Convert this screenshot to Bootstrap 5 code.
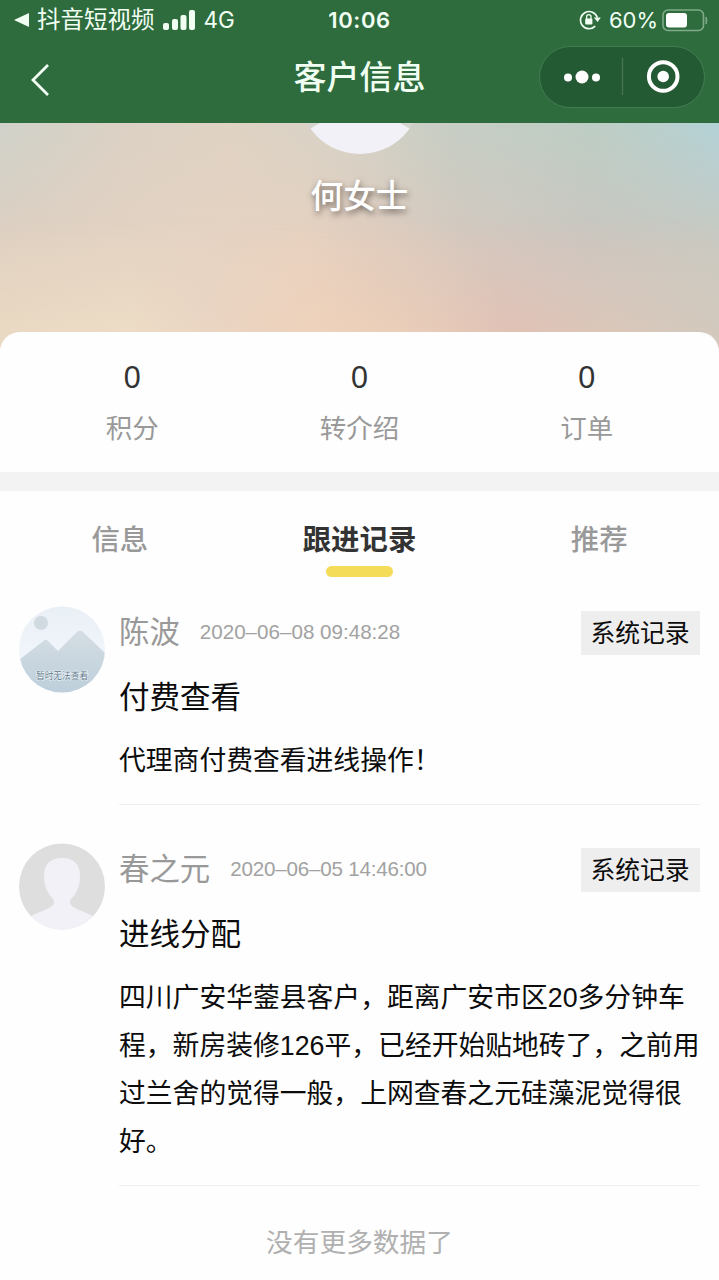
<!DOCTYPE html>
<html lang="zh-CN">
<head>
<meta charset="utf-8">
<meta name="viewport" content="width=device-width, initial-scale=1">
<title>客户信息</title>
<link rel="stylesheet" href="https://cdn.jsdelivr.net/npm/bootstrap@5.3.0/dist/css/bootstrap.min.css">
<style>
  body { font-family: "Liberation Sans", "Noto Sans CJK SC", sans-serif; color: #0c0c0c; background: #fefefe; overflow-x: hidden; }
  svg { display: block; flex: none; }
  .topbar { background: #2e6c3e; color: #f1fff3; height: 123px; }
  .status-row { height: 40px; padding: 0 11px 0 14px; font-family: Inter, "Noto Sans CJK SC", sans-serif; font-size: 23.5px; line-height: 40px; }
  .status-row > div { flex: 1 1 0; }
  .status-row .clock { font-size: 22px; font-weight: 600; letter-spacing: .6px; margin-right: 3px; }
  .status-row .network { font-size: 22.5px; }
  .status-row .level { font-size: 22px; margin: 0 4px 0 8px; }
  .title-row { height: 83px; padding: 0 14px; }
  .title-row > div { flex: 1 1 0; }
  .back svg { margin: 0 0 3px 16px; }
  .page-title { font-size: 33px; font-weight: 500; line-height: 48px; margin-top: -7px; }
  .capsule { width: 166px; height: 62px; border: 1.5px solid #417d50; border-radius: 31px; background: #245a33; margin-top: -10px; }
  .hero { height: 209px; }
  .hero-bg { height: 225px; position: relative; z-index: 0; background: linear-gradient(90deg, #dfd0c2, #e5d3c3 25%, #e7d2c1 42%, #dfccbf 53%, #d4c9c0 65%, #cbc6c1 82%, #c9c9c1); }
  .hero-bg::before, .hero-bg::after { content: ""; position: absolute; inset: 0; z-index: -1; }
  .hero-bg::before { background: linear-gradient(90deg, #cfd1c9, #dbd1c4 17%, #dfd2c3 32%, #d6d2c6 48%, #c6cdc4 63%, #bdcdc3 82%, #b9cfcb 91%, #b2d1d6); -webkit-mask-image: linear-gradient(#000, transparent 56%); mask-image: linear-gradient(#000, transparent 56%); }
  .hero-bg::after { background: linear-gradient(90deg, #ead9c2, #eddcc5 18%, #ead5c3 29%, #efd1b9 45%, #ebceb8 55%, #e2c1b5 71%, #dcc7b9 84%, #d3c9bd); -webkit-mask-image: linear-gradient(transparent 42%, #000 96%); mask-image: linear-gradient(transparent 42%, #000 96%); }
  .hero-name { font-size: 32.7px; font-weight: 500; line-height: 48px; margin-top: 17px; color: #fff; text-shadow: 1px 3px 6px rgba(70,60,55,.75); }
  .stats { height: 140px; border-radius: 20px 20px 0 0; padding: 22px 18.5px 0; background: #fefefe; z-index: 1; }
  .stats b { font-weight: 400; font-size: 30.5px; line-height: 46px; color: #333; }
  .stats span { font-size: 26.5px; line-height: 40px; margin-top: 9px; color: #999; }
  .gap-bar { height: 19px; background: #f3f3f3; }
  .tabs { height: 97px; font-size: 28.4px; font-weight: 500; color: #999; padding: 29px 0 0; line-height: 40px; }
  .tabs .current { color: #333; font-weight: 700; }
  .tabs .current::after { content: ""; width: 67px; height: 11px; border-radius: 6px; background: #f4dc59; margin-top: 6px; }
  .record { padding: 18px 19.5px 0 19px; gap: 14px; }
  .record-main { min-width: 0; border-bottom: 1.5px solid #efefef; }
  .record-head { height: 52px; }
  .who { font-size: 30.4px; color: #999; line-height: 52px; }
  .when { font-size: 20.6px; color: #a2a2a2; margin-left: 20px; line-height: 52px; }
  .tag { font-size: 24.8px; line-height: 45px; width: 119px; height: 44px; background: #eee; margin-top: 5px; }
  .what { font-size: 30.5px; line-height: 44px; margin-top: 17px; }
  .note { font-size: 26.8px; line-height: 48px; margin-top: 18px; padding-bottom: 19px; white-space: nowrap; }
  .record + .record { padding-top: 38px; }
  .record + .record .when { letter-spacing: -.2px; }
  .finish { font-size: 26.7px; line-height: 40px; color: #b0b0b0; padding-top: 37px; }
</style>
</head>
<body>
<header class="topbar">
  <div class="status-row d-flex align-items-center">
    <div class="d-flex align-items-center">
      <svg width="15" height="16" viewBox="0 0 15 16"><path d="M0 8 15 1V15Z" fill="#f1fff3"/></svg>
      <span class="ms-2">抖音短视频</span>
      <svg class="ms-2" width="33" height="20" viewBox="0 0 33 20" fill="#f1fff3"><rect x="0" y="13" width="6" height="7" rx="2"/><rect x="9" y="9" width="6" height="11" rx="2"/><rect x="17.5" y="5" width="6" height="15" rx="2"/><rect x="26" y="0" width="6" height="20" rx="2"/></svg>
      <span class="ms-2 network">4G</span>
    </div>
    <div class="clock text-center flex-grow-0">10:06</div>
    <div class="d-flex align-items-center justify-content-end">
      <svg width="22" height="22" viewBox="0 0 22 22" fill="none" stroke="#f1fff3" stroke-width="1.7"><path d="M16.2 17.2A8.6 8.6 0 1 1 18.3 8.5"/><path d="M14.8 8.6h7l-3.2 4.4Z" fill="#f1fff3" stroke="none"/><rect x="6.2" y="9.5" width="7.2" height="6" rx="1" fill="#f1fff3" stroke="none"/><path d="M7.6 10V7.8a2.2 2.2 0 0 1 4.4 0v2.2" stroke-width="1.3"/></svg>
      <span class="level">60%</span>
      <svg width="46" height="23" viewBox="0 0 46 23"><rect x="1" y="1" width="40.5" height="20.5" rx="5" fill="none" stroke="#80aa88" stroke-width="1.6"/><rect x="4" y="4" width="21" height="14.5" rx="3" fill="#fff"/><path d="M44 8q2 3 0 7Z" fill="#80aa88" stroke="#80aa88"/></svg>
    </div>
  </div>
  <div class="title-row d-flex align-items-center">
    <div class="back"><svg width="20" height="34" viewBox="0 0 20 34"><path d="M18 2 3 17 18 32" fill="none" stroke="#f1fff3" stroke-width="2.8"/></svg></div>
    <div class="page-title text-center">客户信息</div>
    <div class="d-flex justify-content-end">
      <div class="capsule">
        <svg width="163" height="59" viewBox="0 0 163 59" fill="#fff"><circle cx="28" cy="30.5" r="4"/><circle cx="42" cy="30" r="6.5"/><circle cx="56" cy="30.5" r="4"/><path d="M82.5 11V48" stroke="#467650" stroke-width="1.3"/><circle cx="123.2" cy="29.5" r="14.3" fill="none" stroke="#fff" stroke-width="4"/><circle cx="123.2" cy="29.5" r="5.8"/></svg>
      </div>
    </div>
  </div>
</header>

<section class="hero">
  <div class="hero-bg d-flex flex-column align-items-center">
    <svg width="120" height="33" viewBox="0 0 120 33"><defs><clipPath id="face"><circle cx="60" cy="-30" r="61"/></clipPath></defs><g clip-path="url(#face)"><path d="M0-30H120V33H0Z" fill="#d6d4cf"/><path d="M0 12Q8 7 20 0H100Q112 7 120 12V33H0Z" fill="#f2f1f7"/></g></svg>
    <div class="hero-name">何女士</div>
  </div>
</section>

<section class="stats d-flex position-relative">
  <div class="col d-flex flex-column text-center"><b>0</b><span>积分</span></div>
  <div class="col d-flex flex-column text-center"><b>0</b><span>转介绍</span></div>
  <div class="col d-flex flex-column text-center"><b>0</b><span>订单</span></div>
</section>
<div class="gap-bar"></div>

<nav class="tabs d-flex text-center">
  <div class="col">信息</div>
  <div class="col current d-flex flex-column align-items-center">跟进记录</div>
  <div class="col">推荐</div>
</nav>

<main>
  <article class="record d-flex align-items-start">
    <svg width="86" height="87" viewBox="0 0 86 87">
      <defs>
        <clipPath id="disc"><circle cx="43" cy="43.5" r="43"/></clipPath>
        <linearGradient id="sky" x2="0" y2="1"><stop offset="0" stop-color="#e9f0f5"/><stop offset=".5" stop-color="#f0f4fb"/></linearGradient>
        <linearGradient id="hill" x2="0" y2="1"><stop offset="0" stop-color="#d5dde3"/><stop offset="1" stop-color="#bdcfdb"/></linearGradient>
      </defs>
      <g clip-path="url(#disc)"><path d="M0 0H86V87H0Z" fill="url(#sky)"/><circle cx="22" cy="17" r="7" fill="#d2dae1"/><path d="M0 54 25 34.5Q27 33 29 35L39 45 58 26Q61 23 64 26L86 47V87H0Z" fill="url(#hill)"/></g>
      <text x="43" y="73" text-anchor="middle" font-size="8.7" fill="#60788d" stroke="#f4f8fa" stroke-width="1" paint-order="stroke">暂时无法查看</text>
    </svg>
    <div class="record-main flex-grow-1">
      <div class="record-head d-flex align-items-start">
        <span class="who">陈波</span><span class="when">2020–06–08 09:48:28</span>
        <span class="tag text-center ms-auto">系统记录</span>
      </div>
      <div class="what">付费查看</div>
      <div class="note">代理商付费查看进线操作！</div>
    </div>
  </article>
  <article class="record d-flex align-items-start">
    <svg width="86" height="87" viewBox="0 0 86 87"><g clip-path="url(#disc)"><path d="M0 0H86V87H0Z" fill="#dedede"/><path d="M43 15C31 15 25 22 25 32 25 43 28 50 34 56 37 61 33 64 26 67 19 70 14 71 10 75V87H76V75C72 71 67 70 60 67 53 64 49 61 52 56 58 50 61 43 61 32 61 22 55 15 43 15Z" fill="#f2f1f8"/></g></svg>
    <div class="record-main flex-grow-1">
      <div class="record-head d-flex align-items-start">
        <span class="who">春之元</span><span class="when">2020–06–05 14:46:00</span>
        <span class="tag text-center ms-auto">系统记录</span>
      </div>
      <div class="what">进线分配</div>
      <div class="note">四川广安华蓥县客户，距离广安市区20多分钟车<br>程，新房装修126平，已经开始贴地砖了，之前用<br>过兰舍的觉得一般，上网查春之元硅藻泥觉得很<br>好。</div>
    </div>
  </article>
  <div class="finish text-center">没有更多数据了</div>
</main>
<script src="https://cdn.jsdelivr.net/npm/bootstrap@5.3.0/dist/js/bootstrap.bundle.min.js"></script>
</body>
</html>
